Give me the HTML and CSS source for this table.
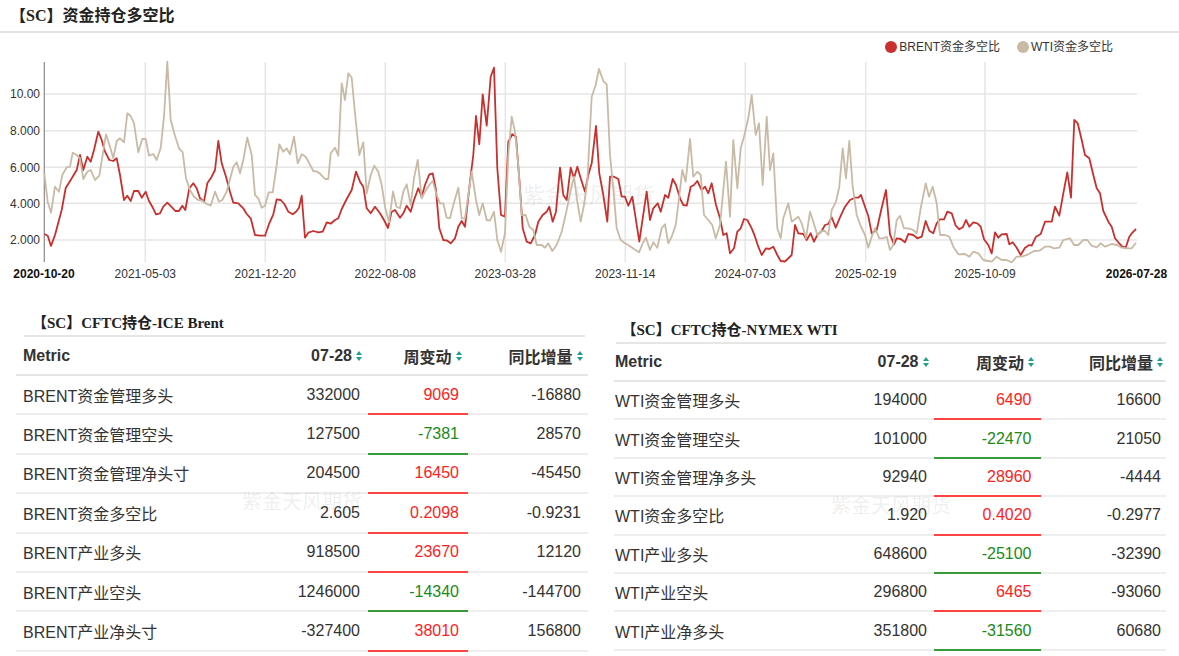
FILE: index.html
```html
<!DOCTYPE html>
<html lang="zh-CN">
<head>
<meta charset="utf-8">
<title>【SC】资金持仓多空比</title>
<link rel="stylesheet" href="styles.css">
</head>
<body>
<div class="page">
  <h1 class="page-title">【SC】资金持仓多空比</h1>

  <section class="chart-panel">
    <div class="legend">
      <span class="legend-item"><i class="dot dot-brent"></i>BRENT资金多空比</span>
      <span class="legend-item"><i class="dot dot-wti"></i>WTI资金多空比</span>
    </div>
    <svg class="chart" width="1179" height="238" viewBox="0 57 1179 238" xmlns="http://www.w3.org/2000/svg">
      <g class="grid-h">
        <line x1="44" y1="94" x2="1137" y2="94"/>
        <line x1="44" y1="130.7" x2="1137" y2="130.7"/>
        <line x1="44" y1="167.3" x2="1137" y2="167.3"/>
        <line x1="44" y1="203.3" x2="1137" y2="203.3"/>
        <line x1="44" y1="240" x2="1137" y2="240"/>
      </g>
      <g class="grid-v">
        <line x1="145.3" y1="62" x2="145.3" y2="262"/>
        <line x1="265.3" y1="62" x2="265.3" y2="262"/>
        <line x1="385.3" y1="62" x2="385.3" y2="262"/>
        <line x1="505.3" y1="62" x2="505.3" y2="262"/>
        <line x1="625.3" y1="62" x2="625.3" y2="262"/>
        <line x1="745.3" y1="62" x2="745.3" y2="262"/>
        <line x1="865.7" y1="62" x2="865.7" y2="262"/>
        <line x1="985" y1="62" x2="985" y2="262"/>
      </g>
      <text class="chart-mark" x="523" y="203">紫金天风期货</text>
      <line class="axis-y" x1="44.3" y1="62" x2="44.3" y2="262"/>
      <g class="ylab">
        <text x="40" y="98.2">10.00</text>
        <text x="40" y="134.9">8.000</text>
        <text x="40" y="171.5">6.000</text>
        <text x="40" y="207.5">4.000</text>
        <text x="40" y="244.2">2.000</text>
      </g>
      <g class="xlab">
        <text class="strong" x="44" y="277.5">2020-10-20</text>
        <text x="145.3" y="277.5">2021-05-03</text>
        <text x="265.3" y="277.5">2021-12-20</text>
        <text x="385.3" y="277.5">2022-08-08</text>
        <text x="505.3" y="277.5">2023-03-28</text>
        <text x="625.3" y="277.5">2023-11-14</text>
        <text x="745.3" y="277.5">2024-07-03</text>
        <text x="865.7" y="277.5">2025-02-19</text>
        <text x="985" y="277.5">2025-10-09</text>
        <text class="strong" x="1136.5" y="277.5">2026-07-28</text>
      </g>
      <polyline class="line-brent" points="44.3,234 47.7,235.7 51,246 55,235 61.7,210 65.7,188 70.7,180 76.7,170 80,155 83.3,170 87.3,156.7 90.7,161.7 94,150 98.3,131.7 101.7,140 105,151.7 109.3,160 113.3,161 116.7,158.3 120,175 124,200 127.3,195.7 130.7,201 134,191 138.3,191 141.7,197.7 145.7,191.7 149,201 152.3,206.7 156,214.3 160,213.3 163.3,206.7 167.3,202.7 171.3,206.7 175.3,211 179,211 182.3,205.7 185.3,210 189.3,188.3 193.3,183.3 196.7,188.3 200,198.3 204,201.7 207.3,183.3 211.7,176.7 215,170 218.3,141 221.7,163.3 226,176.7 230,191.7 233.3,202.7 238.3,203.3 243.3,208.3 246.7,214 250.7,218.3 255,235 260,235.7 265,235.7 269.3,223.3 273.3,214.3 276.7,199.3 280.7,200 284.3,204 288.3,211.7 292.7,214.3 296,211.7 299,207.7 301.7,195.7 305,237.7 308.3,232.7 313.3,231 318.3,232.3 322.7,231.7 326.7,222.3 330.7,223.7 335,220 338.3,218.3 341.7,209 346.7,199 351.7,190 356,171.7 360,181.7 363.3,186.7 366.7,208.3 370.7,213.3 375,206.7 380,213.3 384,220 388,228 391.5,212 395,210 400,217.7 403.3,213.3 406.7,205.7 410.7,211.7 414,200 418.3,188.3 421.7,196.7 425,185 429.3,174.3 432.7,173.3 436,190 439.3,228.3 443.3,240 447.3,240.7 450.7,243.3 455,238.3 458.3,226.7 461.7,221 465,226.7 470,181.7 473.3,155 476,116 479.3,144.3 482.7,94.3 486.7,125.7 490.7,76.7 494,67.7 497.3,168.3 501,215 505,216.7 508.3,141.7 512.3,134.3 516,136.7 520,188.3 522.7,228.3 526.7,241.7 530.7,243.3 535,235 538.3,221.7 542.7,215 546.7,211.7 549.3,206.7 552.7,221.7 556,211.7 560,167.7 563.3,195 566.7,200 570.7,167.7 574,178.3 577.3,166.7 580.7,178.3 585,191.7 588.3,175 591.7,163.3 596,126 599.3,173.3 603.3,195 607.3,221.7 610,176.7 614,176.7 618.3,179 621.7,196.7 625,196.7 628.3,205.7 632.3,196.7 635.7,218.3 639.3,241.7 642.7,218.3 646.7,191.7 650,220 653.3,208.3 657.7,203.3 660.7,211.7 665,195 668.3,197.7 672.7,179 676,185 680,198.3 683.3,205 686.7,205.7 690.7,186.7 694,185 697.3,181 701.7,190 705,186.7 708.3,193.3 711.7,183.3 716,205 720,218.3 723.3,235 726.7,233.3 730,253.3 734,248.3 737.3,231.7 740.7,228.3 744,219 747.3,220 751.7,228.3 755,236.7 758.3,246.7 761.7,255 766,248.3 769.3,249 773.3,246.7 777.3,255 780.7,261 785,261.5 791.7,255 795,225 798.3,233.3 803.3,234 806.7,240 810.7,233.3 814,241.7 817.3,235 821.7,231 825,225 828.3,224 831.7,217.3 835.7,227.7 840,217.3 845,206.7 850,200 855,197.7 858.3,197.7 861,195 865,206.7 868.3,216 871.7,233.3 876.7,230 881.7,207.7 886,190 890,234.3 894,244.3 896.7,238.3 900.7,239 905,242.3 908.3,234 913.3,235 917.3,238.3 921.7,236.7 925.7,221 929.3,230.7 933.3,233.3 936.7,223.3 940,219.3 944,219.3 947.3,211.7 951.7,213.3 955.7,225.7 959.3,229.3 962.7,227.3 966,220 969.3,226.7 973.3,222.3 977.3,223.3 980.7,226.7 984,239.3 988.3,245 991.7,253.3 995,232.3 998.3,237.7 1001.7,234.3 1006.7,234 1009.3,244.3 1012.7,242.3 1016.7,247.7 1020.7,255 1025,247.7 1029.3,245 1031.7,245.7 1036,236.7 1040.7,234 1045,221.7 1051.7,221.7 1055,206.7 1059.3,215.7 1063.3,193.3 1067.3,172.3 1071,197.7 1074.3,120 1077.7,123.3 1081.7,140 1085,155 1089.3,158.3 1093.3,175 1096.7,188.3 1100,193.3 1103.3,211 1108.3,221.7 1111.7,226.7 1115,238.3 1118.3,242.3 1122.3,246.7 1125.7,247.7 1129.3,236.7 1132.7,232.3 1136,229"/>
      <polyline class="line-wti" points="44.3,173.3 47.7,201.7 51,212.7 55,186.7 59,191.7 62.3,175 66.7,167.3 70,166.7 72.7,152.7 76.7,155 80,158.3 83.3,179 87.3,171.7 90.7,170 95,180 99.3,175.7 106,134.3 110,146.7 113.3,158.3 116.7,141 120,138.3 124,142.3 127.3,113.3 130.7,116 134,123.3 138.3,152.3 142.3,139 145.7,139 149,155.7 153.3,154 156.7,160 160.7,147.7 164,116.7 167.3,61.7 170.7,120 175,135.7 179,148.3 182.7,152.3 186,178.3 190,190 194,196.7 198.3,200 202.3,200.7 206.7,204 210.7,205.7 215,191.7 219,201.7 222.3,200 226.7,191.7 233.3,166.7 236.7,162.3 240,173.3 243.3,160 247.3,137.7 251.7,155 255,195 258.3,198.3 261.7,207.7 265,205.7 268.7,192.3 272.7,192.3 276,170 279.3,144.3 283.3,151.7 286.7,148.3 290,154.3 294,136.7 297.7,163.3 301.7,154.3 305.7,156.7 309.3,163.3 313.3,171 317.3,171.7 320.7,174.3 325,179 328.3,179 330.7,153.3 335,147.7 338.3,155.7 341.7,83.3 345,100 348.3,73.3 351.7,77.7 355,113.3 359.3,155 363.3,142.3 366.7,193.3 370.7,175 374.3,165.7 378.3,171.7 381.7,185 385,206.7 389,222.3 393,191.5 396.5,206.7 400,208.3 403.3,191.7 406.7,184.3 410.7,205 414,178.3 417.7,160 421.7,198.3 425,191.7 429.3,185 432.7,181 436.7,195 440,203.3 443.3,203.3 446.7,217.7 450,218.3 453.3,205 458.3,187.7 461.7,218.3 465,218.3 468.3,195 471.7,171.7 476,200 479.3,215 482.7,203.3 486.7,220 490,220.7 494,211.7 497.3,240 501,251.7 505,233.3 508.3,155 511.7,116.7 515,131.7 518.3,165 521.7,215 525.7,215 529.3,226.7 533.3,230 536.7,245 541.7,245 545,247.7 548.3,243.3 552.3,251 556.7,245 561.7,231.7 566.7,210 570,193.3 574,176.7 577.3,201.7 580.7,221.7 584,205 587.3,181.7 591.7,96.7 595.7,85 599,69 603.3,81 606.7,84.3 610,155 613.3,188.3 616.7,228.3 620.7,240 625,243.3 629.3,245.7 634,249 639,252.3 642.7,243.3 646,237.7 650,250 653.3,242.3 657.3,247.7 661.7,228.3 665,224.3 668.3,243.3 671.7,236.7 675.7,225 679,198.3 682.3,170 685.7,181.7 690,139 693.3,176.7 697.3,171.7 700.7,175 704,215 708.3,220 712.3,225 715.7,238.3 720,225 726,161.7 730,216.7 733.3,140 737.3,188.3 740.7,148.3 744,136.7 748.3,118.3 751.7,95 755.7,135 759,123.3 762.7,185 766.7,116.7 770,170 773.3,153.3 777.3,228.3 780.7,238.3 783.3,218.3 788.3,203.3 791.7,221.7 798.3,216.7 801.7,223.3 806,238.3 810,211.7 813.3,221.7 817.3,235 821.7,231 825,231 828.3,235 831.7,210 836,201.7 839.3,186.7 842.7,148.3 846,178.3 849.3,141 852.7,186.7 856.7,215 861,226.7 865,235 868.3,247.7 871.7,236.7 875,228.3 879.3,238.3 883.3,238.3 886.7,236.7 890,250 893.3,245 896.7,220 900,216 904,228.3 908.3,228.3 913.3,230 916.7,233.3 920.7,208.3 925.7,183.3 929,196.7 932.7,186.7 936.7,203.3 940,235 945,235 949.3,236.7 953.3,246.7 958.3,254.3 965,254 969.3,256.7 973.3,251.7 978.3,253.3 983.3,260 988.3,261 991.7,261.7 996.7,256.7 1001.7,260 1006.7,260 1011.7,262.3 1016.7,256.7 1021.7,256.7 1028.3,254.3 1034,251 1039.3,250.7 1045,246.7 1050,246.7 1054,248.3 1059.3,247.7 1063.3,240 1070,238.3 1074,245 1078.3,245 1083.3,240 1087.3,240 1091.7,245.7 1096.7,247.3 1100.7,243.3 1105,246.7 1111.7,244 1117.3,245 1121.7,247.7 1126.7,248.3 1131.7,248.3 1136,242.7"/>
    </svg>
  </section>

  <section class="tables">
    <div class="panel panel-brent">
      <h2 class="panel-title">【SC】CFTC持仓-ICE Brent</h2>
      <div class="grid">
        <div class="row head">
          <div class="cell c-name">Metric</div>
          <div class="cell c-num">07-28<svg class="sort" width="6" height="10" viewBox="0 0 6 10"><path d="M0 4L3 0L6 4Z"/><path d="M0 6L3 10L6 6Z"/></svg></div>
          <div class="cell c-chg">周变动<svg class="sort" width="6" height="10" viewBox="0 0 6 10"><path d="M0 4L3 0L6 4Z"/><path d="M0 6L3 10L6 6Z"/></svg></div>
          <div class="cell c-yoy">同比增量<svg class="sort" width="6" height="10" viewBox="0 0 6 10"><path d="M0 4L3 0L6 4Z"/><path d="M0 6L3 10L6 6Z"/></svg></div>
        </div>
        <div class="row"><div class="cell c-name">BRENT资金管理多头</div><div class="cell c-num">332000</div><div class="cell c-chg up">9069</div><div class="cell c-yoy">-16880</div></div>
        <div class="row"><div class="cell c-name">BRENT资金管理空头</div><div class="cell c-num">127500</div><div class="cell c-chg down">-7381</div><div class="cell c-yoy">28570</div></div>
        <div class="row"><div class="cell c-name">BRENT资金管理净头寸</div><div class="cell c-num">204500</div><div class="cell c-chg up">16450</div><div class="cell c-yoy">-45450</div></div>
        <div class="row"><div class="cell c-name">BRENT资金多空比</div><div class="cell c-num">2.605</div><div class="cell c-chg up">0.2098</div><div class="cell c-yoy">-0.9231</div></div>
        <div class="row"><div class="cell c-name">BRENT产业多头</div><div class="cell c-num">918500</div><div class="cell c-chg up">23670</div><div class="cell c-yoy">12120</div></div>
        <div class="row"><div class="cell c-name">BRENT产业空头</div><div class="cell c-num">1246000</div><div class="cell c-chg down">-14340</div><div class="cell c-yoy">-144700</div></div>
        <div class="row"><div class="cell c-name">BRENT产业净头寸</div><div class="cell c-num">-327400</div><div class="cell c-chg up">38010</div><div class="cell c-yoy">156800</div></div>
      </div>
      <div class="watermark">紫金天风期货</div>
    </div>

    <div class="panel panel-wti">
      <h2 class="panel-title">【SC】CFTC持仓-NYMEX WTI</h2>
      <div class="grid">
        <div class="row head">
          <div class="cell c-name">Metric</div>
          <div class="cell c-num">07-28<svg class="sort" width="6" height="10" viewBox="0 0 6 10"><path d="M0 4L3 0L6 4Z"/><path d="M0 6L3 10L6 6Z"/></svg></div>
          <div class="cell c-chg">周变动<svg class="sort" width="6" height="10" viewBox="0 0 6 10"><path d="M0 4L3 0L6 4Z"/><path d="M0 6L3 10L6 6Z"/></svg></div>
          <div class="cell c-yoy">同比增量<svg class="sort" width="6" height="10" viewBox="0 0 6 10"><path d="M0 4L3 0L6 4Z"/><path d="M0 6L3 10L6 6Z"/></svg></div>
        </div>
        <div class="row"><div class="cell c-name">WTI资金管理多头</div><div class="cell c-num">194000</div><div class="cell c-chg up">6490</div><div class="cell c-yoy">16600</div></div>
        <div class="row"><div class="cell c-name">WTI资金管理空头</div><div class="cell c-num">101000</div><div class="cell c-chg down">-22470</div><div class="cell c-yoy">21050</div></div>
        <div class="row"><div class="cell c-name">WTI资金管理净多头</div><div class="cell c-num">92940</div><div class="cell c-chg up">28960</div><div class="cell c-yoy">-4444</div></div>
        <div class="row"><div class="cell c-name">WTI资金多空比</div><div class="cell c-num">1.920</div><div class="cell c-chg up">0.4020</div><div class="cell c-yoy">-0.2977</div></div>
        <div class="row"><div class="cell c-name">WTI产业多头</div><div class="cell c-num">648600</div><div class="cell c-chg down">-25100</div><div class="cell c-yoy">-32390</div></div>
        <div class="row"><div class="cell c-name">WTI产业空头</div><div class="cell c-num">296800</div><div class="cell c-chg up">6465</div><div class="cell c-yoy">-93060</div></div>
        <div class="row"><div class="cell c-name">WTI产业净多头</div><div class="cell c-num">351800</div><div class="cell c-chg down">-31560</div><div class="cell c-yoy">60680</div></div>
      </div>
      <div class="watermark">紫金天风期货</div>
    </div>
  </section>
</div>
</body>
</html>
```

FILE: styles.css
```css
* { box-sizing: border-box; }

html, body {
  margin: 0;
  padding: 0;
  background: #ffffff;
}

body {
  font-family: "Liberation Sans", "Noto Sans CJK SC", sans-serif;
  color: #333333;
}

.page {
  width: 1179px;
  height: 656px;
  overflow: hidden;
}

.page-title {
  margin: 0;
  height: 33px;
  padding: 1px 0 0 10px;
  font-family: "Liberation Serif", "Noto Sans CJK SC", serif;
  font-size: 16px;
  font-weight: bold;
  line-height: 30px;
  color: #222222;
  border-bottom: 2px solid #e3e3e3;
}

/* chart */
.chart-panel {
  display: flex;
  flex-direction: column;
}

.legend {
  height: 24px;
  padding: 4px 66px 0 0;
  display: flex;
  justify-content: flex-end;
  gap: 17px;
  font-size: 12px;
  line-height: 20px;
  color: #333333;
}

.legend-item {
  display: flex;
  align-items: center;
}

.dot {
  display: inline-block;
  width: 12px;
  height: 12px;
  border-radius: 50%;
  margin-right: 2px;
}

.dot-brent { background: #c8302e; }
.dot-wti { background: #c9baa5; }

.chart {
  display: block;
}

.grid-h line,
.grid-v line {
  stroke: #e6e6e6;
  stroke-width: 1.5;
}

.axis-y {
  stroke: #8a8a8a;
  stroke-width: 1.2;
}

.ylab text {
  font-family: "Liberation Sans", sans-serif;
  font-size: 12px;
  fill: #333333;
  text-anchor: end;
}

.xlab text {
  font-family: "Liberation Sans", sans-serif;
  font-size: 12px;
  fill: #333333;
  text-anchor: middle;
}

.xlab text.strong {
  font-weight: bold;
  fill: #111111;
}

.chart-mark {
  font-family: "Noto Sans CJK SC", sans-serif;
  font-size: 22px;
  fill: rgba(0, 0, 0, 0.07);
}

.line-brent,
.line-wti {
  fill: none;
  stroke-width: 1.8;
  stroke-linejoin: round;
}

.line-brent { stroke: #c8302e; }
.line-wti { stroke: #c9baa5; }

/* tables */
.tables {
  display: flex;
  align-items: flex-start;
}

.panel {
  position: relative;
}

.panel-brent {
  width: 572px;
  margin-left: 16px;
}

.panel-wti {
  width: 552px;
  margin-left: 26px;
}

.panel-title {
  margin: 0;
  font-family: "Liberation Serif", "Noto Sans CJK SC", serif;
  font-size: 15px;
  font-weight: bold;
  line-height: 20px;
  color: #222222;
  border-bottom: 2px solid #e6e6e6;
}

.panel-brent .panel-title {
  margin: 0 3px 0 8px;
  height: 42px;
  padding: 18px 0 2px 8px;
}

.panel-wti .panel-title {
  margin: 0 0 0 1.5px;
  height: 49px;
  padding: 25px 0 2px 6px;
}

.grid {
  display: flex;
  flex-direction: column;
}

.row {
  display: grid;
}

.panel-brent .row { grid-template-columns: 240px 112px 100px 120px; height: 39.4px; }
.panel-brent .row.head { height: 39px; }
.panel-wti .row { grid-template-columns: 200px 120px 106.5px 125.5px; height: 38.4px; }
.panel-wti .row.head { height: 38px; }

.cell {
  display: flex;
  align-items: center;
  justify-content: flex-end;
  font-size: 16px;
  color: #333333;
  border-bottom: 2px solid #eeeeee;
  white-space: nowrap;
}

.row.head .cell {
  font-weight: bold;
  color: #333333;
  border-bottom-color: #e6e6e6;
}

.cell.c-name { justify-content: flex-start; }

.panel-brent .c-name { padding-left: 7px; }
.panel-brent .c-num { padding-right: 8px; }
.panel-brent .c-chg { padding-right: 9px; }
.panel-brent .c-yoy { padding-right: 7px; }
.panel-brent .head .c-num { padding-right: 6px; }
.panel-brent .head .c-chg { padding-right: 6.5px; }
.panel-brent .head .c-yoy { padding-right: 5.5px; }

.panel-wti .c-name { padding-left: 1px; }
.panel-wti .c-num { padding-right: 7px; }
.panel-wti .c-chg { padding-right: 9px; }
.panel-wti .c-yoy { padding-right: 5px; }
.panel-wti .head .c-num { padding-right: 5.5px; }
.panel-wti .head .c-chg { padding-right: 6.5px; }
.panel-wti .head .c-yoy { padding-right: 3px; }

.cell.up {
  color: #ff2222;
  border-bottom-color: #ff4444;
}

.cell.down {
  color: #1a8a1a;
  border-bottom-color: #3a9a3a;
}

.sort {
  margin-left: 4px;
  fill: #1fa08c;
  flex: none;
}

.watermark {
  position: absolute;
  font-family: "Noto Sans CJK SC", sans-serif;
  font-size: 20px;
  line-height: 20px;
  color: rgba(0, 0, 0, 0.08);
  white-space: nowrap;
  pointer-events: none;
}

.panel-brent .watermark { left: 226px; top: 196px; }
.panel-wti .watermark { left: 217px; top: 200px; }
```
